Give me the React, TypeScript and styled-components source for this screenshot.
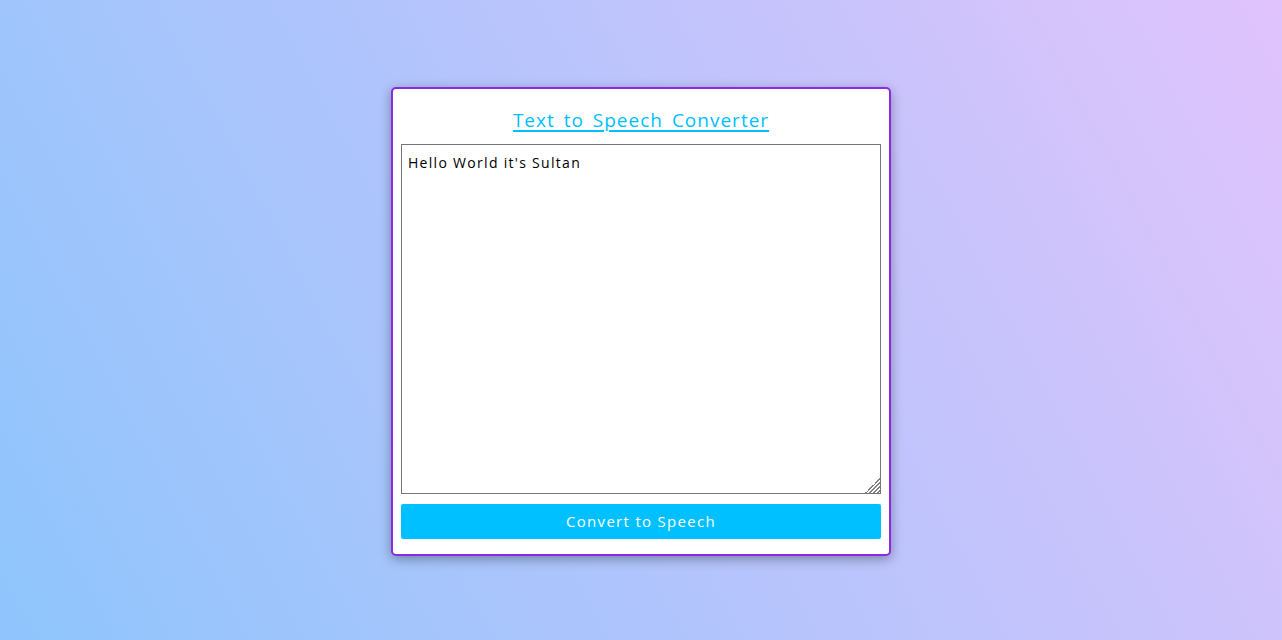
import React from "react";
import styled, { createGlobalStyle } from "styled-components";

const GlobalStyle = createGlobalStyle`
  html, body { margin: 0; padding: 0; }
  body {
    font-family: "Open Sans", "Liberation Sans", sans-serif;
  }
  * { box-sizing: border-box; }
`;

const Page = styled.div`
  height: 640px;
  padding-top: 2px;
  display: flex;
  align-items: center;
  justify-content: center;
  background-color: #8ec5fc;
  background-image: linear-gradient(62deg, #8ec5fc 0%, #e0c3fc 100%);
`;

const Card = styled.div`
  width: 500px;
  background: #ffffff;
  border: 2px solid #8a2be2;
  border-radius: 5px;
  padding: 8px 8px 15px;
  box-shadow: 0 3px 12px rgba(0, 0, 0, 0.35);
  display: flex;
  flex-direction: column;
`;

const Title = styled.h1`
  margin: 12px 0;
  font-size: 19px;
  line-height: 23px;
  font-weight: 500;
  color: #00bfff;
  text-align: center;
  text-decoration: underline;
  text-underline-offset: 3px;
  text-decoration-thickness: 1.5px;
  letter-spacing: 1px;
  word-spacing: 3px;
`;

const TextBox = styled.textarea`
  width: 480px;
  height: 350px;
  border: 1px solid #767676;
  border-radius: 0;
  padding: 8px 6px;
  font-family: "Open Sans", "Liberation Sans", sans-serif;
  font-size: 14px;
  line-height: 20px;
  letter-spacing: 1.3px;
  color: #000;
  resize: both;
  outline: none;
  margin: 0;
  display: block;

  &::-webkit-scrollbar {
    width: 15px;
    height: 15px;
    background: transparent;
  }
  &::-webkit-resizer {
    background-color: #fff;
    background-image:
      linear-gradient(135deg, #fff 50%, transparent 50%),
      repeating-linear-gradient(135deg, #fff 0px, #fff 1.6px, #808080 1.6px, #808080 2.9px);
  }
`;

const Button = styled.button`
  margin-top: 10px;
  width: 480px;
  height: 35px;
  border: none;
  border-radius: 2px;
  background: #00c0ff;
  color: #ffffff;
  font-family: "Open Sans", "Liberation Sans", sans-serif;
  font-size: 15px;
  letter-spacing: 1.3px;
  cursor: pointer;
`;

export default function App() {
  return (
    <>
      <GlobalStyle />
      <Page>
        <Card>
          <Title>Text to Speech Converter</Title>
          <TextBox defaultValue="Hello World it's Sultan" />
          <Button>Convert to Speech</Button>
        </Card>
      </Page>
    </>
  );
}
